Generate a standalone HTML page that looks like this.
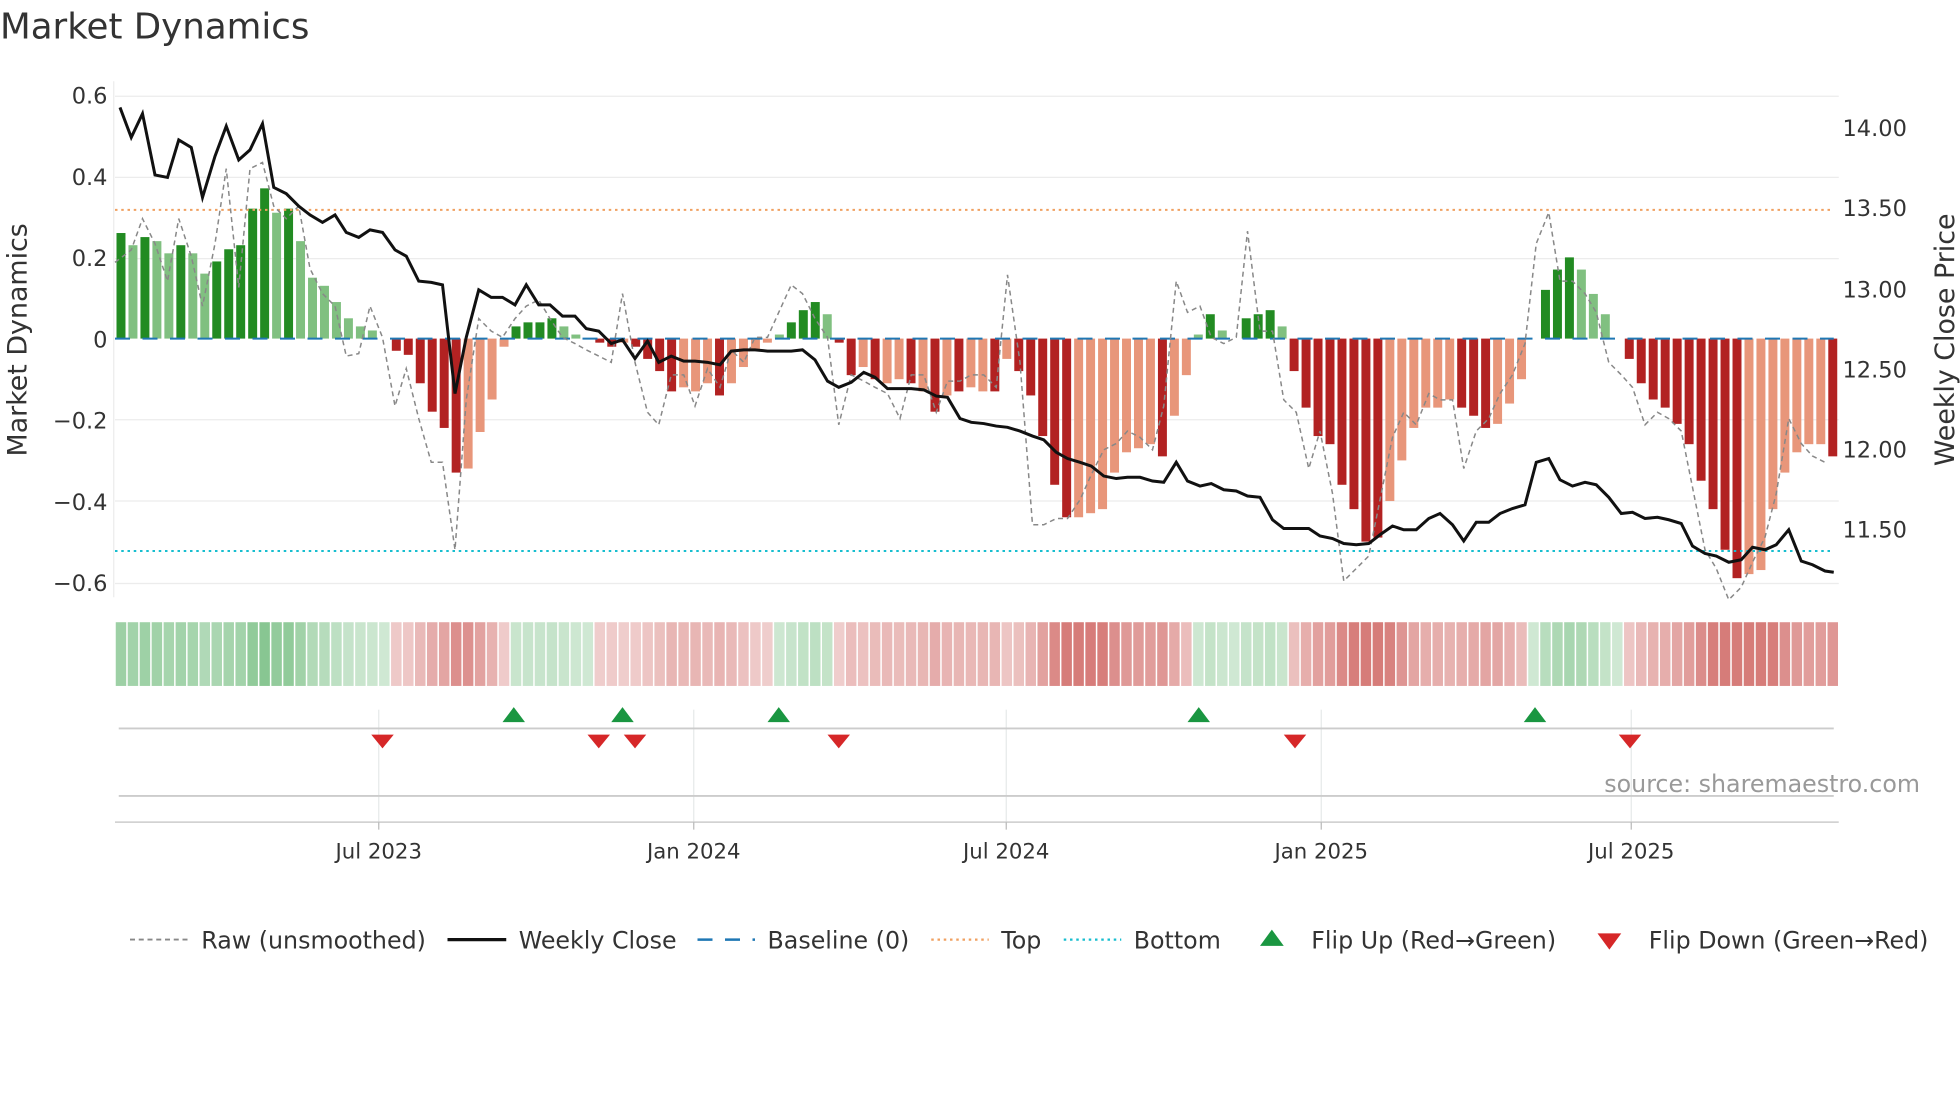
<!DOCTYPE html>
<html><head><meta charset="utf-8"><style>
html,body{margin:0;padding:0;background:#fff;}
svg{display:block;font-family:"DejaVu Sans","Liberation Sans",sans-serif;}
</style></head><body>
<svg id="s" width="1960" height="1102" viewBox="0 0 1568 882" preserveAspectRatio="none" xmlns="http://www.w3.org/2000/svg">
<rect width="1568" height="882" fill="#fff"/>
<text x="0" y="31" font-size="28.5" fill="#333">Market Dynamics</text>
<g stroke="#ececec" stroke-width="1">
<line x1="92" x2="1471" y1="77" y2="77"/><line x1="92" x2="1471" y1="142" y2="142"/>
<line x1="92" x2="1471" y1="207" y2="207"/><line x1="92" x2="1471" y1="336" y2="336"/>
<line x1="92" x2="1471" y1="401" y2="401"/><line x1="92" x2="1471" y1="467" y2="467"/>
<line x1="91" x2="91" y1="65" y2="478"/>
</g>
<g font-size="18" fill="#333" text-anchor="end">
<text x="86" y="83">0.6</text><text x="86" y="148">0.4</text><text x="86" y="213">0.2</text>
<text x="86" y="278">0</text><text x="86" y="343">−0.2</text><text x="86" y="408">−0.4</text><text x="86" y="473">−0.6</text>
</g>
<g font-size="18" fill="#333">
<text x="1474" y="109">14.00</text><text x="1474" y="173">13.50</text><text x="1474" y="238">13.00</text>
<text x="1474" y="302">12.50</text><text x="1474" y="366">12.00</text><text x="1474" y="430">11.50</text>
</g>
<text transform="translate(21,272) rotate(-90)" font-size="21.5" fill="#333" text-anchor="middle">Market Dynamics</text>
<text transform="translate(1563,272) rotate(-90)" font-size="21.5" fill="#333" text-anchor="middle">Weekly Close Price</text>
<g id="bars"></g>
<line x1="92" x2="1467" y1="168" y2="168" stroke="#f0a060" stroke-width="1.6" stroke-dasharray="2,3"/>
<line x1="92" x2="1467" y1="441" y2="441" stroke="#17becf" stroke-width="1.6" stroke-dasharray="2,3"/>
<line x1="92" x2="1467" y1="271" y2="271" stroke="#1f77b4" stroke-width="1.6" stroke-dasharray="12,10"/>
<polyline id="raw" fill="none" stroke="#888" stroke-width="1.2" stroke-dasharray="4,3"/>
<polyline id="close" fill="none" stroke="#111" stroke-width="2.4"/>
<g id="strip"></g>
<g stroke="#e6eaea" stroke-width="1">
<line x1="303" x2="303" y1="568" y2="660"/><line x1="555" x2="555" y1="568" y2="660"/>
<line x1="805" x2="805" y1="568" y2="660"/><line x1="1057" x2="1057" y1="568" y2="660"/>
<line x1="1305" x2="1305" y1="568" y2="660"/>
</g>
<line x1="95" x2="1467" y1="583" y2="583" stroke="#ccc" stroke-width="1.5"/>
<line x1="95" x2="1467" y1="637" y2="637" stroke="#ccc" stroke-width="1.5"/>
<line x1="92" x2="1471" y1="658" y2="658" stroke="#ccc" stroke-width="1.2"/>
<g id="flips"></g>
<text x="1536" y="634" font-size="19" fill="#999" text-anchor="end">source: sharemaestro.com</text>
<g font-size="17" fill="#333" text-anchor="middle">
<text x="303" y="687">Jul 2023</text><text x="555" y="687">Jan 2024</text><text x="805" y="687">Jul 2024</text>
<text x="1057" y="687">Jan 2025</text><text x="1305" y="687">Jul 2025</text>
</g>
<g stroke="#bbb"><line x1="303" x2="303" y1="658" y2="664"/><line x1="555" x2="555" y1="658" y2="664"/><line x1="805" x2="805" y1="658" y2="664"/><line x1="1057" x2="1057" y1="658" y2="664"/><line x1="1305" x2="1305" y1="658" y2="664"/></g>
<g font-size="19" fill="#333">
<line x1="104" x2="150" y1="752" y2="752" stroke="#888" stroke-width="1.5" stroke-dasharray="4,3"/>
<text x="161" y="759">Raw (unsmoothed)</text>
<line x1="358" x2="405" y1="752" y2="752" stroke="#111" stroke-width="2.6"/>
<text x="415" y="759">Weekly Close</text>
<line x1="558" x2="604" y1="752" y2="752" stroke="#1f77b4" stroke-width="2" stroke-dasharray="12,10"/>
<text x="614" y="759">Baseline (0)</text>
<line x1="745" x2="791" y1="752" y2="752" stroke="#f0a060" stroke-width="1.8" stroke-dasharray="2,3"/>
<text x="801" y="759">Top</text>
<line x1="851" x2="897" y1="752" y2="752" stroke="#17becf" stroke-width="1.8" stroke-dasharray="2,3"/>
<text x="907" y="759">Bottom</text>
<polygon points="1008,757 1027,757 1017.5,744" fill="#1a9641"/>
<text x="1049" y="759">Flip Up (Red→Green)</text>
<polygon points="1278,747 1297,747 1287.5,760" fill="#d62728"/>
<text x="1319" y="759">Flip Down (Green→Red)</text>
</g>
</svg>
<script>
var V=[[.26,1],[.23,0],[.25,1],[.24,0],[.21,0],[.23,1],[.21,0],[.16,0],[.19,1],[.22,1],[.23,1],[.32,1],[.37,1],[.31,0],[.32,1],[.24,0],[.15,0],[.13,0],[.09,0],[.05,0],[.03,0],[.02,0],[0,0],[-.03,1],[-.04,1],[-.11,1],[-.18,1],[-.22,1],[-.33,1],[-.32,0],[-.23,0],[-.15,0],[-.02,0],[.03,1],[.04,1],[.04,1],[.05,1],[.03,0],[.01,0],[0,0],[-.01,1],[-.02,1],[-.01,0],[-.02,1],[-.05,1],[-.08,1],[-.13,1],[-.12,0],[-.13,0],[-.11,0],[-.14,1],[-.11,0],[-.07,0],[-.03,0],[-.01,0],[.01,0],[.04,1],[.07,1],[.09,1],[.06,0],[-.01,1],[-.09,1],[-.07,0],[-.10,1],[-.11,0],[-.10,0],[-.11,1],[-.13,0],[-.18,1],[-.14,0],[-.13,1],[-.12,0],[-.13,0],[-.13,1],[-.05,0],[-.08,1],[-.14,1],[-.24,1],[-.36,1],[-.44,1],[-.44,0],[-.43,0],[-.42,0],[-.33,0],[-.28,0],[-.27,0],[-.26,0],[-.29,1],[-.19,0],[-.09,0],[.01,0],[.06,1],[.02,0],[0,0],[.05,1],[.06,1],[.07,1],[.03,0],[-.08,1],[-.17,1],[-.24,1],[-.26,1],[-.36,1],[-.42,1],[-.5,1],[-.49,1],[-.40,0],[-.30,0],[-.22,0],[-.17,0],[-.17,0],[-.15,0],[-.17,1],[-.19,1],[-.22,1],[-.21,0],[-.16,0],[-.10,0],[0,0],[.12,1],[.17,1],[.20,1],[.17,0],[.11,0],[.06,0],[0,0],[-.05,1],[-.11,1],[-.15,1],[-.17,1],[-.21,1],[-.26,1],[-.35,1],[-.42,1],[-.52,1],[-.59,1],[-.58,0],[-.57,0],[-.42,0],[-.33,0],[-.28,0],[-.26,0],[-.26,0],[-.29,1]];
var ns="http://www.w3.org/2000/svg",b=document.getElementById('bars'),st=document.getElementById('strip');
var n=V.length,w=(1471-92)/n;
function el(t,a,p){var e=document.createElementNS(ns,t);for(var k in a)e.setAttribute(k,a[k]);p.appendChild(e);return e;}
V.forEach(function(d,i){var v=d[0],x=92+i*w,h=Math.abs(v)*325,y=v>=0?271-h:271;
var c=v>=0?(d[1]?'#228b22':'#80c080'):(d[1]?'#b22222':'#e8967a');
if(h>0.5)el('rect',{x:x+1.2,y:y,width:w-2.4,height:h,fill:c},b);
var a=Math.min(0.95,0.3+Math.abs(v)*1.5);
el('rect',{x:x+0.6,y:498,width:w-1.2,height:51,fill:v>=0?'#3aa14a':'#c23a36','fill-opacity':a*0.65+0.05},st);});
var raw=[[92,210],[105,200],[114,175],[124,195],[134,225],[143,175],[153,205],[162,245],[172,195],[181,135],[191,230],[200,135],[210,130],[219,165],[229,175],[239,165],[248,215],[258,235],[268,245],[277,285],[287,283],[296,245],[306,270],[316,325],[325,295],[335,335],[345,370],[354,370],[364,440],[373,320],[383,255],[393,265],[402,270],[412,255],[421,245],[431,240],[440,255],[450,270],[460,275],[469,280],[479,285],[489,290],[498,235],[508,290],[518,330],[527,340],[537,300],[547,300],[556,325],[566,295],[576,310],[585,280],[595,290],[604,270],[614,270],[623,250],[633,228],[642,235],[652,255],[662,270],[671,340],[681,300],[691,305],[700,310],[710,315],[720,335],[729,300],[739,300],[749,330],[758,305],[768,305],[777,300],[787,300],[797,310],[806,220],[816,290],[826,420],[835,420],[845,415],[854,415],[864,400],[873,380],[883,360],[893,355],[902,345],[912,350],[922,360],[931,325],[941,225],[950,250],[960,245],[969,270],[979,275],[989,270],[998,185],[1008,265],[1018,265],[1027,320],[1037,330],[1047,375],[1056,345],[1066,395],[1075,465],[1085,455],[1095,445],[1104,400],[1114,350],[1123,330],[1133,340],[1143,315],[1152,320],[1162,320],[1171,375],[1181,345],[1191,335],[1200,315],[1210,300],[1220,275],[1229,195],[1239,170],[1248,225],[1258,225],[1268,235],[1277,250],[1287,290],[1297,300],[1306,310],[1316,340],[1326,330],[1335,335],[1345,345],[1354,390],[1364,440],[1373,455],[1383,480],[1393,470],[1402,450],[1412,430],[1421,395],[1431,335],[1441,355],[1450,365],[1460,370]];
var cl=[[96,86],[105,110],[114,91],[124,140],[134,142],[143,112],[153,118],[162,158],[172,125],[181,101],[191,128],[200,120],[210,99],[219,150],[229,155],[239,165],[248,172],[258,178],[268,172],[277,186],[287,190],[296,184],[306,186],[316,200],[325,205],[335,225],[345,226],[354,228],[364,315],[373,270],[383,232],[393,238],[402,238],[412,244],[421,228],[431,244],[440,244],[450,253],[460,253],[469,263],[479,265],[489,275],[498,272],[508,287],[518,273],[527,290],[537,285],[547,289],[556,289],[566,290],[576,292],[585,281],[595,280],[604,280],[614,281],[623,281],[633,281],[642,280],[652,288],[662,305],[671,310],[681,306],[691,298],[700,302],[710,311],[720,311],[729,311],[739,312],[749,317],[758,318],[768,335],[777,338],[787,339],[797,341],[806,342],[816,345],[826,349],[835,352],[845,362],[854,367],[864,370],[873,373],[883,381],[893,383],[902,382],[912,382],[922,385],[931,386],[941,370],[950,385],[960,389],[969,387],[979,392],[989,393],[998,397],[1008,398],[1018,416],[1027,423],[1037,423],[1047,423],[1056,429],[1066,431],[1075,435],[1085,436],[1095,435],[1104,428],[1114,421],[1123,424],[1133,424],[1143,415],[1152,411],[1162,420],[1171,433],[1181,418],[1191,418],[1200,411],[1210,407],[1220,404],[1229,370],[1239,367],[1248,384],[1258,389],[1268,386],[1277,388],[1287,398],[1297,411],[1306,410],[1316,415],[1326,414],[1335,416],[1345,419],[1354,437],[1364,443],[1373,445],[1383,450],[1393,448],[1402,438],[1412,440],[1421,436],[1431,424],[1441,449],[1450,452],[1460,457],[1467,458]];
document.getElementById('raw').setAttribute('points',raw.join(' '));
document.getElementById('close').setAttribute('points',cl.join(' '));
var f=document.getElementById('flips');
[411,498,623,959,1228].forEach(function(x){el('polygon',{points:(x-9)+',578 '+(x+9)+',578 '+x+',566',fill:'#1a9641'},f);});
[306,479,508,671,1036,1304].forEach(function(x){el('polygon',{points:(x-9)+',588 '+(x+9)+',588 '+x+',599',fill:'#d62728'},f);});
</script>
</body></html>
